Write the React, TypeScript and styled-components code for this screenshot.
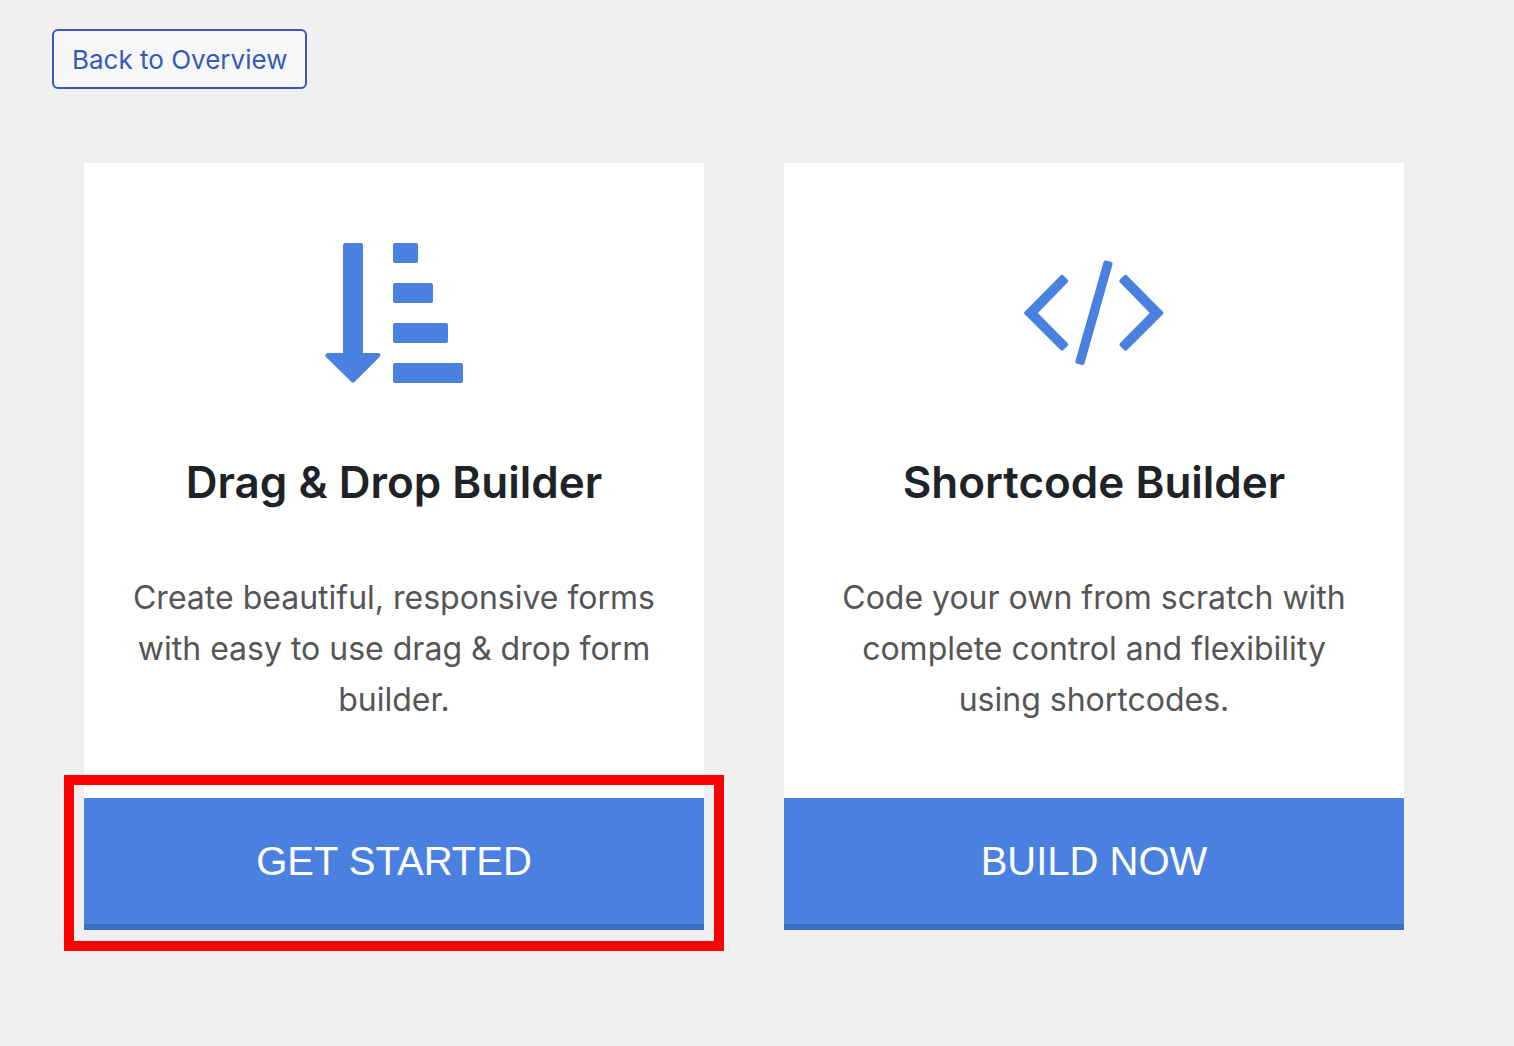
import React from "react";
import styled, { createGlobalStyle } from "styled-components";

const GlobalStyle = createGlobalStyle`
  *, *::before, *::after { box-sizing: border-box; }
  body {
    margin: 0;
    background: #f0f0f0;
    color: #1d2327;
    font-family: Inter, "Liberation Sans", sans-serif;
  }
`;

const Page = styled.main`
  min-height: 100vh;
  padding: 29px 52px 40px;
`;

const BackLink = styled.a`
  display: inline-flex;
  align-items: center;
  height: 60px;
  padding: 2px 18px 0;
  border: 2px solid #3858b8;
  border-radius: 6px;
  background: #f6f8f8;
  color: #3858b8;
  font-size: 26px;
  line-height: 52px;
  text-decoration: none;
  white-space: nowrap;
`;

const Cards = styled.div`
  display: grid;
  grid-template-columns: repeat(2, minmax(0, 620px));
  gap: 80px;
  margin-top: 74px;
  padding: 0 32px;
`;

const Card = styled.section`
  display: flex;
  flex-direction: column;
  background: #fff;
  text-align: center;
`;

const Body = styled.div`
  flex: 1;
  padding: 80px 40px 73px;
`;

const Icon = styled.svg`
  display: block;
  width: 140px;
  height: 140px;
  margin: 0 auto;
  fill: #4a81e0;
`;

const Title = styled.h2`
  margin: 69px 0 60px;
  font-size: 44px;
  font-weight: 600;
  line-height: 60px;
`;

const Description = styled.p`
  margin: 0;
  color: #555;
  font-size: 32px;
  line-height: 51px;
`;

const ActionArea = styled.div`
  position: relative;
`;

const Action = styled.button`
  display: block;
  width: 100%;
  height: 132px;
  padding: 0;
  border: 0;
  border-bottom: 6px solid #3b6cc0;
  background: #4a81e0;
  color: #fff;
  font-family: "Liberation Sans", sans-serif;
  font-size: 40px;
  text-transform: uppercase;
  cursor: pointer;
`;

const Highlight = styled.span`
  position: absolute;
  inset: -23px -20px -21px;
  border: 10px solid #f00;
  pointer-events: none;
`;

const SortIcon = () => (
  <Icon viewBox="0 0 140 140" aria-hidden="true">
    <path d="M21 0h16q2 0 2 2v108h15q2.500 0 2.500 2q0 1-1 2L30.500 139q-1.500 1.500-3 0L2 114q-1-1-0.500-2.500q0.500-1.500 2.500-1.500h15V2q0-2 2-2z" />
    <rect x="69" y="0" width="25" height="20" rx="2" />
    <rect x="69" y="40" width="40" height="20" rx="2" />
    <rect x="69" y="80" width="55" height="20" rx="2" />
    <rect x="69" y="120" width="70" height="20" rx="2" />
  </Icon>
);

const CodeIcon = () => (
  <Icon viewBox="0 0 140 140" aria-hidden="true">
    <path d="M36.500 32.500q1.500-1.500 3 0l4 4q1.500 1.500 0 3L13.800 70l29.700 30q1.500 1.500 0 3l-4 4q-1.500 1.500-3 0L0.700 71.300q-1.300-1.300 0-2.600z" />
    <path d="M103 32.500q-1.500-1.500-3 0l-4 4q-1.500 1.500 0 3L125.800 70l-29.700 30q-1.500 1.500 0 3l4 4q1.500 1.500 3 0l35.800-35.700q1.300-1.300 0-2.600z" />
    <path d="M79.400 19.500q0.600-2.500 2.600-2l5 1.300q2 0.600 1.500 2.700L60.600 120q-0.700 2.500-2.600 2l-5-1.200q-2.200-0.600-1.600-2.800z" />
  </Icon>
);

type Builder = {
  title: string;
  text: string;
  action: string;
  icon: React.ReactNode;
  highlighted?: boolean;
};

const builders: Builder[] = [
  {
    title: "Drag & Drop Builder",
    text: "Create beautiful, responsive forms with easy to use drag & drop form builder.",
    action: "Get started",
    icon: <SortIcon />,
    highlighted: true,
  },
  {
    title: "Shortcode Builder",
    text: "Code your own from scratch with complete control and flexibility using shortcodes.",
    action: "Build now",
    icon: <CodeIcon />,
  },
];

export default function App() {
  return (
    <>
      <GlobalStyle />
      <Page>
        <BackLink href="#overview">Back to Overview</BackLink>
        <Cards>
          {builders.map((builder) => (
            <Card key={builder.title}>
              <Body>
                {builder.icon}
                <Title>{builder.title}</Title>
                <Description>{builder.text}</Description>
              </Body>
              <ActionArea>
                <Action type="button">{builder.action}</Action>
                {builder.highlighted && <Highlight />}
              </ActionArea>
            </Card>
          ))}
        </Cards>
      </Page>
    </>
  );
}
